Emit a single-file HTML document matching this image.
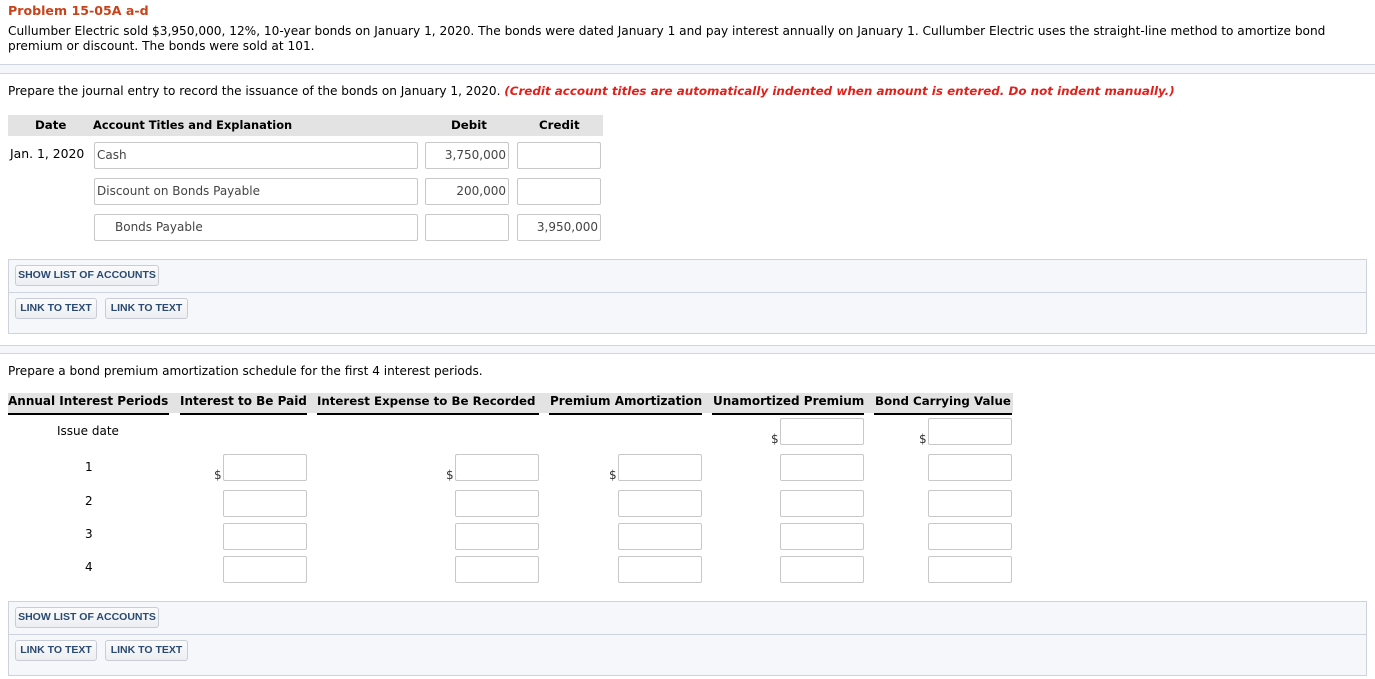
<!DOCTYPE html>
<html><head><style>
body{margin:0;width:1375px;height:679px;background:#fff;font-family:"DejaVu Sans","Liberation Sans",sans-serif;font-size:12px;color:#000;position:relative;overflow:hidden}
.a{position:absolute;white-space:nowrap}
.in{position:absolute;box-sizing:border-box;border:1px solid #c8c8c8;border-radius:2px;background:#fff;height:27px;font-size:12px;color:#444;line-height:25px;padding:0 2px;white-space:nowrap}
.r{text-align:right}
.box{position:absolute;left:8px;width:1359px;height:75px;background:#f5f7fa;border:1px solid #ccd3de;box-sizing:border-box}
.btn{position:absolute;height:21px;box-sizing:border-box;border:1px solid #c8ccd4;border-radius:3px;background:linear-gradient(#fbfbfc,#eceef2);font-family:"Liberation Sans",sans-serif;font-size:10.5px;font-weight:bold;color:#2a4a70;line-height:19px;text-align:center;white-space:nowrap;overflow:hidden}
.sep{position:absolute;left:0;width:1375px;height:1px;background:#cfd6e0}
.hd{font-weight:bold;font-size:11.8px}
.sh{font-weight:bold;font-size:12px}
.ul{position:absolute;top:413px;height:2px;background:#000}
.d{position:absolute;font-size:12px;color:#333}
</style></head><body>
<div class="a" style="left:8px;top:3px;color:#c8431a;font-weight:bold;font-size:12.6px">Problem 15-05A a-d</div>
<div class="a" style="left:8px;top:24px;font-size:12.15px;line-height:15px">Cullumber Electric sold $3,950,000, 12%, 10-year bonds on January 1, 2020. The bonds were dated January 1 and pay interest annually on January 1. Cullumber Electric uses the straight-line method to amortize bond<br>premium or discount. The bonds were sold at 101.</div>
<div class="sep" style="top:64px"></div><div class="a" style="left:0;top:65px;width:1375px;height:8px;background:#f4f6f9"></div><div class="sep" style="top:73px"></div>
<div class="a" style="left:8px;top:84px;font-size:12.1px">Prepare the journal entry to record the issuance of the bonds on January 1, 2020. <span style="color:#e0211b;font-weight:bold;font-style:italic;font-size:11.9px">(Credit account titles are automatically indented when amount is entered. Do not indent manually.)</span></div>
<div class="a" style="left:8px;top:115px;width:595px;height:21px;background:#e3e3e3"></div>
<div class="a hd" style="left:35px;top:118px">Date</div>
<div class="a hd" style="left:93px;top:118px;font-size:11.4px">Account Titles and Explanation</div>
<div class="a hd" style="left:451px;top:118px">Debit</div>
<div class="a hd" style="left:539px;top:118px">Credit</div>
<div class="a" style="left:10px;top:146px;font-size:12.4px">Jan. 1, 2020</div>
<div class="in" style="left:94px;top:142px;width:324px">Cash</div>
<div class="in r" style="left:425px;top:142px;width:84px">3,750,000</div>
<div class="in" style="left:517px;top:142px;width:84px"></div>
<div class="in" style="left:94px;top:178px;width:324px">Discount on Bonds Payable</div>
<div class="in r" style="left:425px;top:178px;width:84px">200,000</div>
<div class="in" style="left:517px;top:178px;width:84px"></div>
<div class="in" style="left:94px;top:214px;width:324px;padding-left:20px">Bonds Payable</div>
<div class="in" style="left:425px;top:214px;width:84px"></div>
<div class="in r" style="left:517px;top:214px;width:84px">3,950,000</div>

<div class="box" style="top:259px"></div><div class="a" style="left:9px;top:292px;width:1357px;height:1px;background:#ccd3de"></div>
<div class="btn" style="left:15px;top:265px;width:144px">SHOW LIST OF ACCOUNTS</div>
<div class="btn" style="left:15px;top:298px;width:82px">LINK TO TEXT</div>
<div class="btn" style="left:105px;top:298px;width:83px">LINK TO TEXT</div>

<div class="sep" style="top:345px"></div><div class="a" style="left:0;top:346px;width:1375px;height:7px;background:#f4f6f9"></div><div class="sep" style="top:353px"></div>
<div class="a" style="left:8px;top:364px;font-size:12.1px">Prepare a bond premium amortization schedule for the first 4 interest periods.</div>
<div class="a" style="left:8px;top:393px;width:1005px;height:20px;background:#e3e3e3"></div>
<div class="a sh" style="left:8px;top:394px">Annual Interest Periods</div>
<div class="a sh" style="left:180px;top:394px">Interest to Be Paid</div>
<div class="a sh" style="left:317px;top:394px;font-size:11.8px">Interest Expense to Be Recorded</div>
<div class="a sh" style="left:550px;top:394px">Premium Amortization</div>
<div class="a sh" style="left:713px;top:394px">Unamortized Premium</div>
<div class="a sh" style="left:875px;top:394px;font-size:11.8px">Bond Carrying Value</div>
<div class="ul" style="left:8px;width:161px"></div>
<div class="ul" style="left:180px;width:127px"></div>
<div class="ul" style="left:317px;width:222px"></div>
<div class="ul" style="left:549px;width:153px"></div>
<div class="ul" style="left:712px;width:152px"></div>
<div class="ul" style="left:874px;width:138px"></div>

<div class="a" style="left:57px;top:424px">Issue date</div>
<div class="d" style="left:771px;top:432px">$</div><div class="in" style="left:780px;top:418px;width:84px"></div>
<div class="d" style="left:919px;top:432px">$</div><div class="in" style="left:928px;top:418px;width:84px"></div>

<div class="a" style="left:85px;top:460px">1</div>
<div class="d" style="left:214px;top:468px">$</div><div class="in" style="left:223px;top:454px;width:84px"></div>
<div class="d" style="left:446px;top:468px">$</div><div class="in" style="left:455px;top:454px;width:84px"></div>
<div class="d" style="left:609px;top:468px">$</div><div class="in" style="left:618px;top:454px;width:84px"></div>
<div class="in" style="left:780px;top:454px;width:84px"></div>
<div class="in" style="left:928px;top:454px;width:84px"></div>

<div class="a" style="left:85px;top:494px">2</div>
<div class="in" style="left:223px;top:490px;width:84px"></div>
<div class="in" style="left:455px;top:490px;width:84px"></div>
<div class="in" style="left:618px;top:490px;width:84px"></div>
<div class="in" style="left:780px;top:490px;width:84px"></div>
<div class="in" style="left:928px;top:490px;width:84px"></div>

<div class="a" style="left:85px;top:527px">3</div>
<div class="in" style="left:223px;top:523px;width:84px"></div>
<div class="in" style="left:455px;top:523px;width:84px"></div>
<div class="in" style="left:618px;top:523px;width:84px"></div>
<div class="in" style="left:780px;top:523px;width:84px"></div>
<div class="in" style="left:928px;top:523px;width:84px"></div>

<div class="a" style="left:85px;top:560px">4</div>
<div class="in" style="left:223px;top:556px;width:84px"></div>
<div class="in" style="left:455px;top:556px;width:84px"></div>
<div class="in" style="left:618px;top:556px;width:84px"></div>
<div class="in" style="left:780px;top:556px;width:84px"></div>
<div class="in" style="left:928px;top:556px;width:84px"></div>

<div class="box" style="top:601px"></div><div class="a" style="left:9px;top:634px;width:1357px;height:1px;background:#ccd3de"></div>
<div class="btn" style="left:15px;top:607px;width:144px">SHOW LIST OF ACCOUNTS</div>
<div class="btn" style="left:15px;top:640px;width:82px">LINK TO TEXT</div>
<div class="btn" style="left:105px;top:640px;width:83px">LINK TO TEXT</div>
</body></html>
